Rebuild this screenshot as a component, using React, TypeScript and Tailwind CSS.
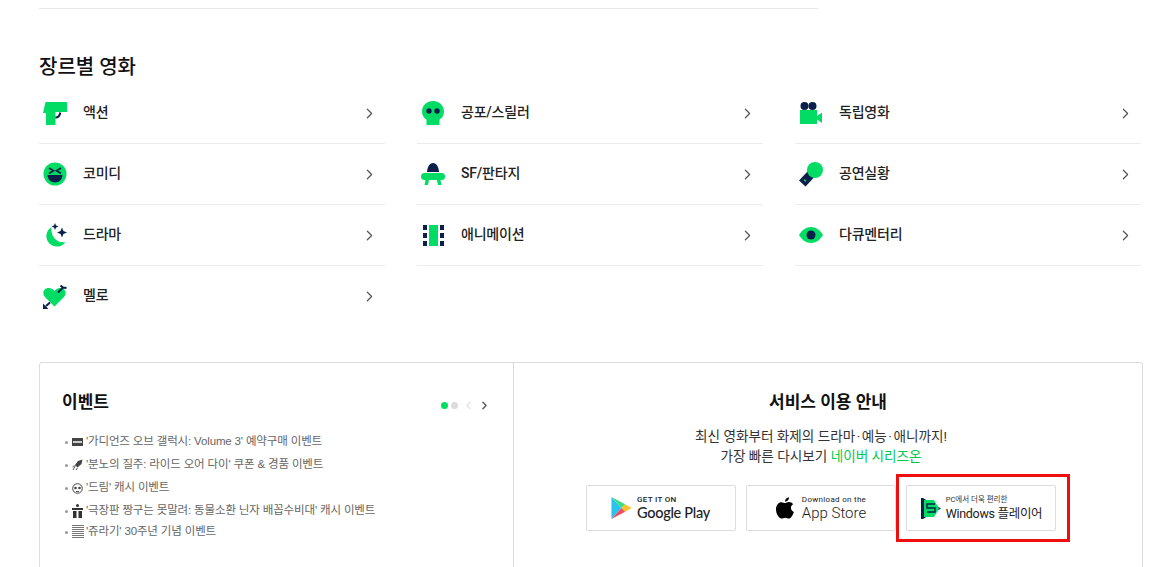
import { ChevronRight, ChevronLeft } from "lucide-react";
import type { ReactNode } from "react";

const NAVY = "#0b1f4b";
const GREEN = "#00dc64";

const IconAction = () => (
  <svg width="24" height="23" viewBox="0 0 24 23">
    <path d="M2.500 0H24v10H12.500v13H3V11H0z" fill={GREEN} />
    <path d="M12.500 15.500c2.500 0 4.300-2 4.800-5" fill="none" stroke={NAVY} strokeWidth="2" />
  </svg>
);
const IconComedy = () => (
  <svg width="24" height="24" viewBox="0 0 24 24">
    <circle cx="12" cy="12" r="11.500" fill={GREEN} />
    <path d="M6 6l4.500 2.700L6 11.400M18 6l-4.500 2.700 4.500 2.700" fill="none" stroke={NAVY} strokeWidth="1.700" />
    <path d="M4.500 13h15c0 4.500-3.300 7.500-7.500 7.500S4.500 17.500 4.500 13z" fill={NAVY} />
  </svg>
);
const IconDrama = () => (
  <svg width="24" height="24" viewBox="0 0 24 24">
    <path d="M8.500 4a10.500 10.500 0 1 0 14 15c-7.500 1.500-15-4-14-15z" fill={GREEN} />
    <path d="M12 0l1 2.500L15.500 3.500 13 4.500 12 7l-1-2.500L8.500 3.500 11 2.500z" fill={NAVY} />
    <path d="M19 4.500l1.400 3.600L24 9.500l-3.600 1.400L19 14.500l-1.400-3.600L14 9.500l3.600-1.400z" fill={NAVY} />
  </svg>
);
const IconMelo = () => (
  <svg width="24" height="24" viewBox="0 0 24 24">
    <path d="M11.500 21.500L2 12C-1.500 8 1 3 5.500 3c3 0 5 1.700 6 3 1-1.300 3-3 6-3 4.500 0 7 5 3.500 9z" fill={GREEN} />
    <path d="M15 7.500l5-5M17.500 0.500L20 2.500l3.500.5" stroke={NAVY} strokeWidth="2" fill="none" />
    <path d="M3 21l4-3.500" stroke={NAVY} strokeWidth="2" fill="none" />
    <path d="M0 18.500V24h5.500z" fill={NAVY} />
  </svg>
);
const IconHorror = () => (
  <svg width="22" height="24" viewBox="0 0 22 24">
    <path d="M11 0C5 0 0 4.500 0 10.500c0 4 2 6.700 4.500 8.200V24h13v-5.300c2.500-1.500 4.500-4.200 4.500-8.200C22 4.500 17 0 11 0z" fill={GREEN} />
    <circle cx="7" cy="10" r="2.700" fill={NAVY} />
    <circle cx="15" cy="10" r="2.700" fill={NAVY} />
  </svg>
);
const IconSf = () => (
  <svg width="24" height="22" viewBox="0 0 24 22">
    <path d="M6 9C6.500 3.500 8.500 0 12 0s5.500 3.500 6 9z" fill={NAVY} />
    <rect x="0" y="10" width="24" height="7" rx="3.500" fill={GREEN} />
    <path d="M4.500 17h3.500l-1 5H3.500zM16 17h3.500l1 5H17z" fill={GREEN} />
  </svg>
);
const IconAni = () => (
  <svg width="21" height="21" viewBox="0 0 21 21">
    <rect x="6" y="0" width="9" height="21" fill={GREEN} />
    {[0, 8, 16].map((y) => (
      <g key={y} fill={NAVY}>
        <rect x="0" y={y} width="4" height="5" />
        <rect x="17" y={y} width="4" height="5" />
      </g>
    ))}
  </svg>
);
const IconIndie = () => (
  <svg width="22" height="22" viewBox="0 0 22 22">
    <circle cx="4.500" cy="4" r="4" fill={NAVY} />
    <circle cx="12.500" cy="4" r="4" fill={NAVY} />
    <rect x="0" y="8" width="17" height="14" fill={GREEN} />
    <path d="M17 14l5-3.500v10.500l-5-3.500z" fill={GREEN} />
  </svg>
);
const IconConcert = () => (
  <svg width="24" height="25" viewBox="0 0 24 25">
    <path d="M9 9l6 6.500-8.500 9L0 18.500z" fill={NAVY} />
    <path d="M5 17.500l2 2" stroke={GREEN} strokeWidth="1.300" />
    <circle cx="16" cy="8" r="8" fill={GREEN} />
  </svg>
);
const IconDocu = () => (
  <svg width="24" height="16" viewBox="0 0 24 16">
    <path d="M0 8C3 3 7 0 12 0s9 3 12 8c-3 5-7 8-12 8S3 13 0 8z" fill={GREEN} />
    <circle cx="12" cy="8" r="4.500" fill={NAVY} />
  </svg>
);

type Genre = { name: string; icon: ReactNode };

const genres: Genre[] = [
  { name: "액션", icon: <IconAction /> },
  { name: "공포/스릴러", icon: <IconHorror /> },
  { name: "독립영화", icon: <IconIndie /> },
  { name: "코미디", icon: <IconComedy /> },
  { name: "SF/판타지", icon: <IconSf /> },
  { name: "공연실황", icon: <IconConcert /> },
  { name: "드라마", icon: <IconDrama /> },
  { name: "애니메이션", icon: <IconAni /> },
  { name: "다큐멘터리", icon: <IconDocu /> },
  { name: "멜로", icon: <IconMelo /> },
];

const events = [
  "'가디언즈 오브 갤럭시: Volume 3' 예약구매 이벤트",
  "'분노의 질주: 라이드 오어 다이' 쿠폰 & 경품 이벤트",
  "'드림' 캐시 이벤트",
  "'극장판 짱구는 못말려: 동물소환 닌자 배꼽수비대' 캐시 이벤트",
  "'쥬라기' 30주년 기념 이벤트",
];

const EventGlyph = ({ i }: { i: number }) => {
  if (i === 0)
    return (
      <svg width="11" height="8" viewBox="0 0 11 8">
        <rect width="11" height="8" fill="#444" />
        <rect x="1" y="3" width="9" height="2" fill="#ccc" />
      </svg>
    );
  if (i === 1)
    return (
      <svg width="11" height="12" viewBox="0 0 11 12">
        <path d="M10.500.5L6 2 3 6l2.500 2.500 4-3.500z" fill="#444" />
        <path d="M1 11l2.500-4.500M4 11l1.500-2M.5 8l2-1.500" stroke="#555" fill="none" />
      </svg>
    );
  if (i === 2)
    return (
      <svg width="11" height="11" viewBox="0 0 11 11">
        <circle cx="5.500" cy="5.500" r="4.800" fill="none" stroke="#444" />
        <circle cx="3.500" cy="5" r="1.300" fill="#444" />
        <circle cx="7.500" cy="5" r="1.300" fill="#444" />
        <rect x="4" y="8" width="3" height="1" fill="#444" />
      </svg>
    );
  if (i === 3)
    return (
      <svg width="11" height="14" viewBox="0 0 11 14">
        <circle cx="5.500" cy="1.500" r="1.500" fill="#333" />
        <rect y="4" width="11" height="2" fill="#333" />
        <rect x="1" y="7" width="3.500" height="7" fill="#333" />
        <rect x="6.500" y="7" width="3.500" height="7" fill="#333" />
      </svg>
    );
  return (
    <svg width="12" height="14" viewBox="0 0 12 14">
      {[0, 2, 4, 6, 8, 10, 12].map((y) => (
        <rect key={y} y={y} width="12" height="1" fill="#777" />
      ))}
    </svg>
  );
};

const StoreButton = ({ children }: { children: ReactNode }) => (
  <div className="flex h-[46px] w-[150px] items-center justify-center gap-[5px] rounded-[2px] border border-[#dcdcdc] bg-white">
    {children}
  </div>
);

export default function App() {
  return (
    <div className="h-[567px] w-[1168px] overflow-hidden bg-white font-['Roboto','Noto_Sans_CJK_KR',sans-serif] text-[#111]">
      <div className="ml-[39px] mt-2 h-px w-[779px] bg-[#e8e8e8]" />

      <div className="pl-[39px] pr-[25px]">
        <h2 className="mt-[44px] text-[20px] font-medium leading-[28px] text-[#111]">장르별 영화</h2>

        <ul className="mt-[2px] grid w-[1102px] grid-cols-[346px_346px_346px] gap-x-[32px]">
          {genres.map((g, i) => (
            <li
              key={g.name}
              className={`flex h-[61px] items-center pr-[7px] ${i < 9 ? "border-b border-[#ececec]" : ""}`}
            >
              <span className="flex w-[32px] shrink-0 items-center justify-center mr-[12px]">{g.icon}</span>
              <span className="grow pb-[2px] text-[14px] font-medium tracking-[-0.2px] text-[#222]">{g.name}</span>
              <ChevronRight size={17} strokeWidth={1.700} className="text-[#555]" />
            </li>
          ))}
        </ul>

        <section className="mt-[35px] flex h-[300px] w-[1104px] rounded-[3px] border border-[#dcdcdc]">
          <div className="w-[474px] shrink-0 border-r border-[#dcdcdc] pl-[22px] pr-[22px] pt-[26px]">
            <div className="flex items-start justify-between">
              <h3 className="text-[17px] font-semibold leading-[26px] text-[#111]">이벤트</h3>
              <div className="mt-[10px] flex items-center gap-[2px]">
                <span className="h-[7px] w-[7px] rounded-full bg-[#00dc64]" />
                <span className="ml-[1px] h-[7px] w-[7px] rounded-full bg-[#dcdcdc]" />
                <ChevronLeft size={13} strokeWidth={2.400} className="ml-[2px] text-[#e2e2e2]" />
                <ChevronRight size={13} strokeWidth={2.400} className="ml-[1px] text-[#555]" />
              </div>
            </div>
            <ul className="mt-[18px] flex flex-col gap-[5px]">
              {events.map((text, i) => (
                <li key={text} className="flex h-[18px] items-center font-['Liberation_Sans','Noto_Sans_CJK_KR',sans-serif] text-[11.5px] tracking-[-0.15px] text-[#666] last:-mt-[2px]">
                  <span className="ml-[3px] h-[3px] w-[3px] rounded-full bg-[#999]" />
                  <span className="ml-[3px] mr-[2px] flex w-[13px] justify-center"><EventGlyph i={i} /></span>
                  <span>{text}</span>
                </li>
              ))}
            </ul>
          </div>

          <div className="flex grow flex-col items-center pt-[26px]">
            <h3 className="text-[17px] font-semibold leading-[26px] text-[#111]">서비스 이용 안내</h3>
            <div className="flex flex-col items-center pr-[14px]">
              <p className="mt-[11px] text-center text-[13.6px] leading-[20px] text-[#333]">
                최신 영화부터 화제의 드라마<span className="px-[1.500px]">·</span>예능<span className="px-[1.500px]">·</span>애니까지!
                <br />
                가장 빠른 다시보기 <span className="text-[#00c853]">네이버 시리즈온</span>
              </p>
              <div className="mt-[19px] flex gap-[10px]">
                <StoreButton>
                  <svg className="-ml-[1px]" width="21" height="22" viewBox="0 0 22 24">
                    <path d="M0 0v24l11-12z" fill="#29c3f0" />
                    <path d="M0 0l11 12 4-4z" fill="#3ddc84" />
                    <path d="M0 24l11-12 4 4z" fill="#ef4b5f" />
                    <path d="M15 8l7 4-7 4-4-4z" fill="#fbc02d" />
                  </svg>
                  <div className="flex flex-col">
                    <span className="text-[8px] font-medium leading-[9px] tracking-[0.3px] text-[#222]">GET IT ON</span>
                    <span className="font-['Lato',sans-serif] text-[14.500px] font-medium leading-[17px] tracking-[-0.3px] text-[#222]">Google Play</span>
                  </div>
                </StoreButton>
                <StoreButton>
                  <svg className="mr-[3px]" width="18" height="22" viewBox="0 0 20 24">
                    <path d="M14.500 0c.2 2.500-2 5-4.500 5C9.700 2.600 12 .2 14.500 0zM10 6.500c1 0 2.500-1.200 4.500-1.200 1.700 0 3.500.9 4.500 2.400-3.600 2-3 7.200.9 8.700-1 2.700-3.200 7.300-5.700 7.300-1.500 0-2.200-1-4-1s-2.700 1-4 1C2.800 23.700 0 18 0 13.500 0 8.500 3 5.500 6 5.500c1.700 0 3 1 4 1z" fill="#000" />
                  </svg>
                  <div className="flex flex-col">
                    <span className="text-[8px] leading-[10px] tracking-[0.3px] text-[#222]">Download on the</span>
                    <span className="text-[15px] font-light leading-[17px] text-[#222]">App Store</span>
                  </div>
                </StoreButton>
                <div className="relative">
                  <StoreButton>
                    <svg className="ml-[1px]" width="20" height="21" viewBox="0 0 20 21">
                      <path d="M0 0h2l18 10.500L2 21H0z" fill={NAVY} />
                      <path d="M3 2h10l5 8.500-5 8.500H3z" fill={GREEN} />
                      <path d="M14 6H6v4h8v4H6" fill="none" stroke={NAVY} strokeWidth="1.500" />
                    </svg>
                    <div className="flex flex-col">
                      <span className="text-[7.500px] leading-[10px] text-[#333]">PC에서 더욱 편리한</span>
                      <span className="text-[12.500px] leading-[17px] tracking-[-0.3px] text-[#222]">Windows 플레이어</span>
                    </div>
                  </StoreButton>
                  <div className="absolute -bottom-[11px] -left-[10px] -right-[14px] -top-[11px] border-[3px] border-[#f00f0f]" />
                </div>
              </div>
            </div>
          </div>
        </section>
      </div>
    </div>
  );
}
